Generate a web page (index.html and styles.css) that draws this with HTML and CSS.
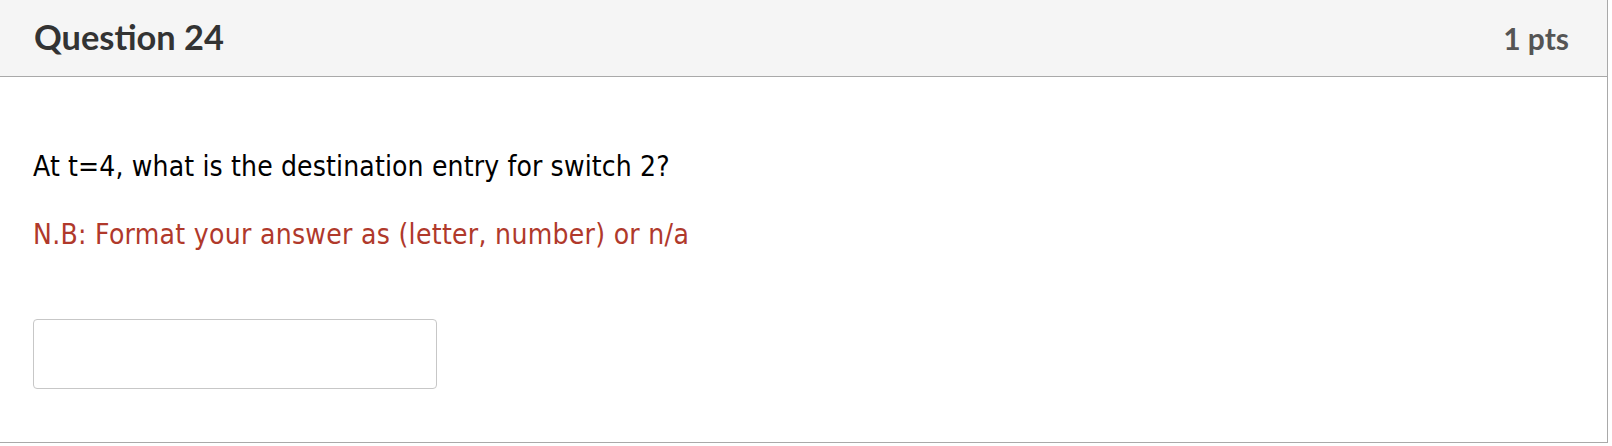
FILE: index.html
```html
<!DOCTYPE html>
<html lang="en">
<head>
<meta charset="utf-8">
<title>Question 24</title>
<link rel="stylesheet" href="styles.css">
</head>
<body>
<div class="panel">
  <div class="header">
    <span class="title">Question 24</span>
    <span class="points">1 pts</span>
  </div>
  <div class="content">
    <p class="question">At t=4, what is the destination entry for switch 2?</p>
    <p class="note">N.B: Format your answer as (letter, number) or n/a</p>
    <input class="answer" type="text" aria-label="Answer">
  </div>
</div>
</body>
</html>
```

FILE: styles.css
```css
html, body {
  margin: 0;
  padding: 0;
  background: #ffffff;
}

.panel {
  width: 1607px;
  height: 442px;
  border-right: 1px solid #a9a9a9;
  border-bottom: 1px solid #a9a9a9;
  display: flex;
  flex-direction: column;
}

.header {
  box-sizing: border-box;
  height: 77px;
  background: #f5f5f5;
  border-bottom: 1px solid #a9a9a9;
  display: flex;
  justify-content: space-between;
  align-items: baseline;
  padding: 16px 38px 0 34px;
  font-family: Lato, "Liberation Sans", sans-serif;
  font-weight: 700;
}

.title {
  font-size: 34.4px;
  color: #333333;
}

.points {
  font-size: 30px;
  color: #555555;
}

.content {
  padding: 73px 0 0 33px;
  font-family: "DejaVu Sans Condensed", "DejaVu Sans", sans-serif;
  font-stretch: condensed;
}

.question,
.note {
  margin: 0;
  font-size: 28px;
  line-height: 1.2;
  letter-spacing: 0.15px;
}

.question {
  color: #000000;
}

.note {
  margin-top: 34px;
  color: #b0392b;
  letter-spacing: 0.3px;
}

.answer {
  display: block;
  box-sizing: border-box;
  width: 404px;
  height: 70px;
  margin-top: 68px;
  border: 1px solid #c7c7c7;
  border-radius: 4px;
  background: #ffffff;
  padding: 0 10px;
  font-size: 20px;
}
```
